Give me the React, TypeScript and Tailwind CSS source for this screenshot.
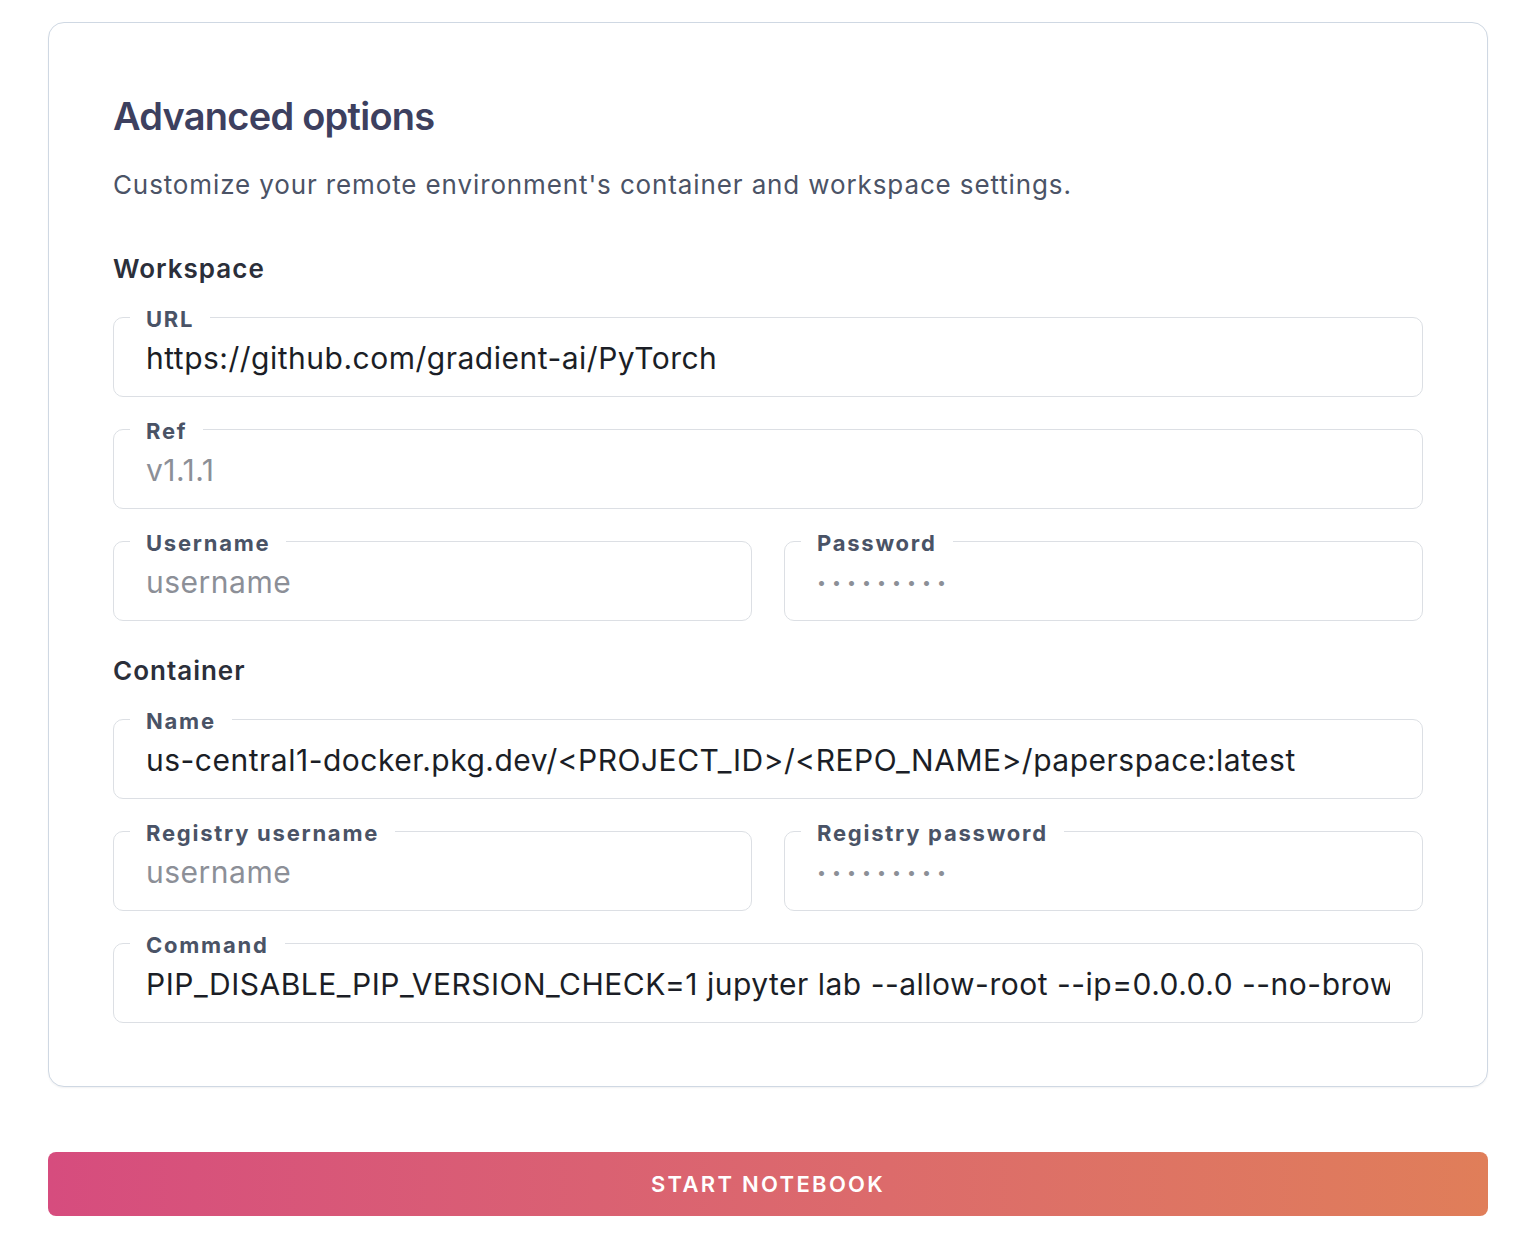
import React from "react"

type FieldProps = {
  label: string
  value?: string
  placeholder?: string
  muted?: boolean
  secret?: boolean
}

function Field({ label, value, placeholder, muted, secret }: FieldProps) {
  return (
    <fieldset className="min-w-0 rounded-[10px] border border-[#dcdfe4] px-4">
      <legend className="px-4 pt-[4px] text-[22px] font-bold leading-[26px] tracking-[0.08em] text-[#4a5366]">
        {label}
      </legend>
      {secret ? (
        <input
          type="text"
          readOnly
          placeholder="•••••••••"
          className="block h-[64px] w-full bg-transparent px-4 pt-[8px] pb-[20px] text-[16px] leading-[36px] tracking-[6px] text-[#1b1e26] outline-none placeholder:text-[#8c8f97]"
        />
      ) : (
        <input
          type="text"
          readOnly
          defaultValue={value}
          placeholder={placeholder}
          className={
            "block h-[64px] w-full bg-transparent px-4 pt-[8px] pb-[20px] text-[30px] leading-[36px] tracking-[0.5px] outline-none placeholder:text-[#8c8f97] " +
            (muted ? "text-[#8c8f97]" : "text-[#1b1e26]")
          }
        />
      )}
    </fieldset>
  )
}

export default function App() {
  return (
    <div className="min-h-screen bg-white pt-[22px] pl-12 font-['Inter',sans-serif]">
      <div className="w-[1440px]">
        {/* Advanced options card */}
        <div className="rounded-2xl border border-[#cfd8e3] bg-white px-16 pt-[69px] pb-[63px] shadow-[0_1px_2px_rgba(15,23,42,0.06)]">
          <h1 className="text-[38px] font-semibold leading-[48px] tracking-[-0.02em] text-[#3d405f]">
            Advanced options
          </h1>
          <p className="mt-[29px] text-[26px] leading-[32px] tracking-[0.88px] text-[#4b5366]">
            Customize your remote environment's container and workspace settings.
          </p>

          <h2 className="mt-[52px] text-[26px] font-semibold leading-[32px] tracking-[1px] text-[#2b2f3a]">
            Workspace
          </h2>
          <div className="mt-[17px] flex flex-col gap-[17px]">
            <Field label="URL" value="https://github.com/gradient-ai/PyTorch" />
            <Field label="Ref" value="v1.1.1" muted />
            <div className="grid grid-cols-2 gap-8">
              <Field label="Username" placeholder="username" />
              <Field label="Password" secret />
            </div>
          </div>

          <h2 className="mt-[34px] text-[26px] font-semibold leading-[32px] tracking-[1px] text-[#2b2f3a]">
            Container
          </h2>
          <div className="mt-[17px] flex flex-col gap-[17px]">
            <Field
              label="Name"
              value="us-central1-docker.pkg.dev/<PROJECT_ID>/<REPO_NAME>/paperspace:latest"
            />
            <div className="grid grid-cols-2 gap-8">
              <Field label="Registry username" placeholder="username" />
              <Field label="Registry password" secret />
            </div>
            <Field
              label="Command"
              value="PIP_DISABLE_PIP_VERSION_CHECK=1 jupyter lab --allow-root --ip=0.0.0.0 --no-browser --ServerApp.trust_xheaders=True"
            />
          </div>
        </div>

        <button
          type="button"
          className="mt-[65px] flex h-16 w-full items-center justify-center rounded-lg bg-gradient-to-r from-[#d64c7e] to-[#e07e59] text-[22px] font-semibold tracking-[0.105em] text-white"
        >
          START NOTEBOOK
        </button>
      </div>
    </div>
  )
}
